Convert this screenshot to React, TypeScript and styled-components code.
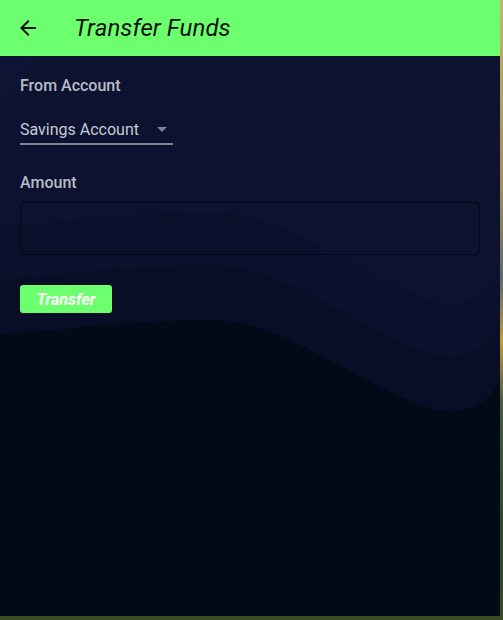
import React from "react";
import styled, { createGlobalStyle } from "styled-components";

const Global = createGlobalStyle`
  html, body { margin: 0; padding: 0; }
  body {
    width: 503px;
    height: 620px;
    overflow: hidden;
    font-family: Roboto, "Liberation Sans", sans-serif;
    background: linear-gradient(to bottom, #c9b36f 0%, #a38f55 30%, #5d6a6a 45%, #c29a3a 55%, #4a5a44 65%, #2d4a22 85%, #3b4a20 100%);
  }
`;

const Frame = styled.div`
  position: relative;
  width: 500px;
  height: 616px;
  background: #0c1230;
  overflow: hidden;
  display: flex;
  flex-direction: column;
`;

const Waves = styled.svg`
  position: absolute;
  left: 0;
  top: 0;
  width: 500px;
  height: 616px;
  z-index: 0;
`;

const Header = styled.header`
  position: relative;
  z-index: 1;
  height: 56px;
  flex: none;
  background: #6cff6e;
  display: flex;
  align-items: center;
  padding-left: 16px;
`;

const BackButton = styled.button`
  width: 24px;
  height: 24px;
  padding: 0;
  border: 0;
  background: transparent;
  display: flex;
  align-items: center;
  justify-content: center;
  cursor: pointer;
`;

const Title = styled.h1`
  margin: 0 0 0 34px;
  font-family: Roboto, "Liberation Sans", sans-serif;
  font-style: italic;
  font-weight: 400;
  font-size: 24px;
  color: #111;
  letter-spacing: 0.1px;
`;

const Content = styled.main`
  position: relative;
  z-index: 1;
  padding: 20px 20px 0 20px;
  display: flex;
  flex-direction: column;
  align-items: flex-start;
`;

const Label = styled.div<{ $gap?: number }>`
  font-size: 16px;
  line-height: 19px;
  font-weight: 500;
  color: #b9bdc7;
  margin-top: ${(p) => p.$gap ?? 0}px;
`;

const Select = styled.div`
  margin-top: 22px;
  width: 153px;
  height: 24px;
  display: flex;
  align-items: center;
  justify-content: space-between;
  border-bottom: 2px solid #80858f;
  padding-bottom: 2px;
  font-size: 16px;
  color: #c6cad2;
  box-sizing: content-box;
`;

const Caret = styled.span`
  width: 0;
  height: 0;
  margin-right: 6px;
  border-left: 5px solid transparent;
  border-right: 5px solid transparent;
  border-top: 5px solid #7f848e;
`;

const AmountInput = styled.input`
  margin-top: 10px;
  width: 460px;
  height: 53px;
  box-sizing: border-box;
  border: 1px solid #050916;
  border-radius: 4px;
  background: transparent;
  color: #c6cad2;
  font-size: 16px;
  padding: 0 12px;
  outline: none;
`;

const TransferButton = styled.button`
  margin-top: 30px;
  width: 92px;
  height: 28px;
  border: 0;
  border-radius: 3px;
  background: #6cff6e;
  color: #fff;
  font-family: Roboto, "Liberation Sans", sans-serif;
  font-style: italic;
  font-weight: 700;
  font-size: 16px;
  cursor: pointer;
  padding: 0;
`;

const wave = (y: number) =>
  `M0,${y} C80,${y - 8} 150,${y - 15} 210,${y - 15} C280,${y - 15} 340,${y + 38} 420,${y + 70} C460,${y + 86} 492,${y + 70} 500,${y + 42} L500,616 L0,616 Z`;

export default function App() {
  return (
    <>
      <Global />
      <Frame>
        <Waves viewBox="0 0 500 616" aria-hidden>
          <path d="M0,60 L40,56 L0,110 Z" fill="#0e1433" />
          <path d={wave(227)} fill="#0b112c" />
          <path d={wave(280)} fill="#080e25" />
          <path d={wave(335)} fill="#030a17" />
        </Waves>
        <Header>
          <BackButton aria-label="Back">
            <svg width="24" height="24" viewBox="0 0 24 24">
              <path
                d="M20 11H7.83l5.59-5.59L12 4l-8 8 8 8 1.41-1.41L7.83 13H20v-2z"
                fill="#111"
              />
            </svg>
          </BackButton>
          <Title>Transfer Funds</Title>
        </Header>
        <Content>
          <Label>From Account</Label>
          <Select>
            <span>Savings Account</span>
            <Caret />
          </Select>
          <Label $gap={28}>Amount</Label>
          <AmountInput type="text" />
          <TransferButton>Transfer</TransferButton>
        </Content>
      </Frame>
    </>
  );
}
